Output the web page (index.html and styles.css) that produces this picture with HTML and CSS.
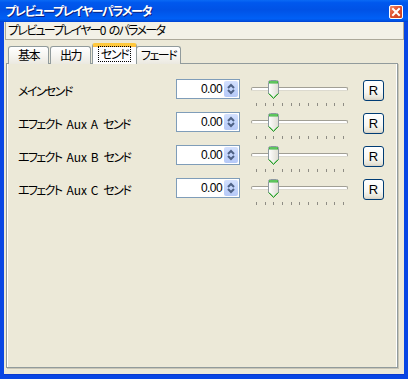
FILE: index.html
```html
<!DOCTYPE html>
<html lang="ja">
<head>
<meta charset="utf-8">
<title>プレビュープレイヤーパラメータ</title>
<link rel="stylesheet" href="styles.css">
</head>
<body>
<div class="window">
  <div class="titlebar">
    <span class="title">プレビュープレイヤーパラメータ</span>
    <span class="close"><svg width="10" height="10" viewBox="0 0 10 10"><path d="M2 2 L8 8 M8 2 L2 8" stroke="#fff" stroke-width="2" stroke-linecap="square"/></svg></span>
  </div>
  <div class="frame">
    <div class="subbar">プレビュープレイヤー0 のパラメータ</div>
    <div class="tabs">
      <div class="tab">基本</div>
      <div class="tab">出力</div>
      <div class="tab active"><span class="focus">センド</span></div>
      <div class="tab">フェード</div>
    </div>
    <div class="panel">
      <div class="row">
        <span class="label">メインセンド</span>
        <div class="num"><span class="val">0.00</span><span class="spin"><svg width="14" height="16" viewBox="0 0 14 16"><path d="M4 7 L7 4 L10 7" fill="none" stroke="#4d6185" stroke-width="2"/><path d="M4 9 L7 12 L10 9" fill="none" stroke="#4d6185" stroke-width="2"/></svg></span></div>
        <div class="slider">
          <div class="track"></div>
          <svg class="thumb" width="11" height="19" viewBox="0 0 11 19"><defs><linearGradient id="tg1" x1="0" y1="0" x2="1" y2="0"><stop offset="0" stop-color="#ffffff"/><stop offset="1" stop-color="#dedcd2"/></linearGradient></defs><path d="M0.5 2.5 Q0.5 0.5 2.5 0.5 H8.5 Q10.5 0.5 10.5 2.5 V13.5 L5.5 18.5 L0.5 13.5 Z" fill="url(#tg1)" stroke="#8c98a0"/><path d="M1 1.5 Q1 1 2.5 1 H8.5 Q10 1 10 1.5 V3.5 H1 Z" fill="#3cb33c"/><path d="M2 2 H9" stroke="#7fd67f"/><path d="M0.5 13.5 L5.5 18.5 L10.5 13.5" fill="none" stroke="#2f9f2f"/><path d="M1.5 13.5 L5.5 17.5 L9.5 13.5" fill="none" stroke="#8ed08e"/></svg>
          <div class="ticks"><i></i><i></i><i></i><i></i><i></i><i></i><i></i><i></i><i></i><i></i><i></i></div>
        </div>
        <button class="reset">R</button>
      </div>
      <div class="row">
        <span class="label">エフェクト <span class="lat">Aux A</span> センド</span>
        <div class="num"><span class="val">0.00</span><span class="spin"><svg width="14" height="16" viewBox="0 0 14 16"><path d="M4 7 L7 4 L10 7" fill="none" stroke="#4d6185" stroke-width="2"/><path d="M4 9 L7 12 L10 9" fill="none" stroke="#4d6185" stroke-width="2"/></svg></span></div>
        <div class="slider">
          <div class="track"></div>
          <svg class="thumb" width="11" height="19" viewBox="0 0 11 19"><defs><linearGradient id="tg2" x1="0" y1="0" x2="1" y2="0"><stop offset="0" stop-color="#ffffff"/><stop offset="1" stop-color="#dedcd2"/></linearGradient></defs><path d="M0.5 2.5 Q0.5 0.5 2.5 0.5 H8.5 Q10.5 0.5 10.5 2.5 V13.5 L5.5 18.5 L0.5 13.5 Z" fill="url(#tg2)" stroke="#8c98a0"/><path d="M1 1.5 Q1 1 2.5 1 H8.5 Q10 1 10 1.5 V3.5 H1 Z" fill="#3cb33c"/><path d="M2 2 H9" stroke="#7fd67f"/><path d="M0.5 13.5 L5.5 18.5 L10.5 13.5" fill="none" stroke="#2f9f2f"/><path d="M1.5 13.5 L5.5 17.5 L9.5 13.5" fill="none" stroke="#8ed08e"/></svg>
          <div class="ticks"><i></i><i></i><i></i><i></i><i></i><i></i><i></i><i></i><i></i><i></i><i></i></div>
        </div>
        <button class="reset">R</button>
      </div>
      <div class="row">
        <span class="label">エフェクト <span class="lat">Aux B</span> センド</span>
        <div class="num"><span class="val">0.00</span><span class="spin"><svg width="14" height="16" viewBox="0 0 14 16"><path d="M4 7 L7 4 L10 7" fill="none" stroke="#4d6185" stroke-width="2"/><path d="M4 9 L7 12 L10 9" fill="none" stroke="#4d6185" stroke-width="2"/></svg></span></div>
        <div class="slider">
          <div class="track"></div>
          <svg class="thumb" width="11" height="19" viewBox="0 0 11 19"><defs><linearGradient id="tg3" x1="0" y1="0" x2="1" y2="0"><stop offset="0" stop-color="#ffffff"/><stop offset="1" stop-color="#dedcd2"/></linearGradient></defs><path d="M0.5 2.5 Q0.5 0.5 2.5 0.5 H8.5 Q10.5 0.5 10.5 2.5 V13.5 L5.5 18.5 L0.5 13.5 Z" fill="url(#tg3)" stroke="#8c98a0"/><path d="M1 1.5 Q1 1 2.5 1 H8.5 Q10 1 10 1.5 V3.5 H1 Z" fill="#3cb33c"/><path d="M2 2 H9" stroke="#7fd67f"/><path d="M0.5 13.5 L5.5 18.5 L10.5 13.5" fill="none" stroke="#2f9f2f"/><path d="M1.5 13.5 L5.5 17.5 L9.5 13.5" fill="none" stroke="#8ed08e"/></svg>
          <div class="ticks"><i></i><i></i><i></i><i></i><i></i><i></i><i></i><i></i><i></i><i></i><i></i></div>
        </div>
        <button class="reset">R</button>
      </div>
      <div class="row">
        <span class="label">エフェクト <span class="lat">Aux C</span> センド</span>
        <div class="num"><span class="val">0.00</span><span class="spin"><svg width="14" height="16" viewBox="0 0 14 16"><path d="M4 7 L7 4 L10 7" fill="none" stroke="#4d6185" stroke-width="2"/><path d="M4 9 L7 12 L10 9" fill="none" stroke="#4d6185" stroke-width="2"/></svg></span></div>
        <div class="slider">
          <div class="track"></div>
          <svg class="thumb" width="11" height="19" viewBox="0 0 11 19"><defs><linearGradient id="tg4" x1="0" y1="0" x2="1" y2="0"><stop offset="0" stop-color="#ffffff"/><stop offset="1" stop-color="#dedcd2"/></linearGradient></defs><path d="M0.5 2.5 Q0.5 0.5 2.5 0.5 H8.5 Q10.5 0.5 10.5 2.5 V13.5 L5.5 18.5 L0.5 13.5 Z" fill="url(#tg4)" stroke="#8c98a0"/><path d="M1 1.5 Q1 1 2.5 1 H8.5 Q10 1 10 1.5 V3.5 H1 Z" fill="#3cb33c"/><path d="M2 2 H9" stroke="#7fd67f"/><path d="M0.5 13.5 L5.5 18.5 L10.5 13.5" fill="none" stroke="#2f9f2f"/><path d="M1.5 13.5 L5.5 17.5 L9.5 13.5" fill="none" stroke="#8ed08e"/></svg>
          <div class="ticks"><i></i><i></i><i></i><i></i><i></i><i></i><i></i><i></i><i></i><i></i><i></i></div>
        </div>
        <button class="reset">R</button>
      </div>
    </div>
  </div>
</div>
</body>
</html>
```

FILE: styles.css
```css
* { box-sizing: border-box; }
html, body { margin: 0; padding: 0; }
body {
  font-family: "Noto Sans CJK JP", "Liberation Sans", sans-serif;
  font-size: 12px;
  font-feature-settings: "palt";
  color: #000;
}
.window {
  width: 408px;
  height: 379px;
  display: flex;
  flex-direction: column;
  background: #ece9d8;
}
.titlebar {
  height: 22px;
  flex: none;
  display: flex;
  align-items: center;
  justify-content: space-between;
  padding: 0 5px 0 5px;
  background: linear-gradient(180deg, #0a6af5 0%, #0058ee 12%, #0052e6 45%, #0060f6 85%, #0050e0 95%, #0040d0 100%);
  color: #fff;
}
.title {
  font-weight: bold;
  font-size: 12px;
  line-height: 16px;
  text-shadow: 1px 1px 0 #0a1f80;
  letter-spacing: -1.3px;
}
.close {
  width: 14px;
  height: 14px;
  margin-top: 2px;
  border: 1px solid #fff;
  border-radius: 2px;
  background: linear-gradient(135deg, #f08a6a 0%, #e0502e 45%, #c9401f 100%);
  display: flex;
  align-items: center;
  justify-content: center;
}
.close svg { display: block; }
.frame {
  flex: 1;
  display: flex;
  flex-direction: column;
  border: 4px solid #0846e4;
  border-top: 0;
  box-shadow: inset 0 -1px 0 #0a3ad0;
  background: #ece9d8;
}
.subbar {
  height: 18px;
  margin-left: 1px;
  padding-left: 2px;
  border: 1px solid #aca899;
  border-top: 0;
  background: #f3f1e7;
  line-height: 16px;
  letter-spacing: -1.7px;
  word-spacing: 3px;
  white-space: nowrap;
}
.tabs {
  height: 24px;
  flex: none;
  display: flex;
  align-items: flex-end;
  padding-left: 4px;
  position: relative;
  z-index: 1;
}
.tab {
  height: 18px;
  min-width: 41px;
  margin-right: 1px;
  padding: 0 4px;
  border: 1px solid #919b9c;
  border-bottom: 0;
  border-radius: 3px 3px 0 0;
  background: linear-gradient(180deg, #ffffff 0%, #f6f5f1 50%, #ebe9e0 100%);
  line-height: 16px;
  text-align: center;
  white-space: nowrap;
  letter-spacing: -1.5px;
}
.tab.active {
  height: 21px;
  min-width: 45px;
  margin: 0 -1px 0 0;
  padding: 0 4px;
  border-top: 3px solid #ffc83c;
  box-shadow: inset 0 1px 0 #f7b940;
  background: #fcfcfe;
  line-height: 15px;
  position: relative;
  z-index: 2;
}
.focus {
  display: inline-block;
  outline: 1px dotted #000;
  outline-offset: 0;
  padding: 0 2px;
  line-height: 14px;
}
.panel {
  flex: 1;
  margin: -1px 6px 7px 2px;
  padding: 15px 0 0 11px;
  border: 1px solid #919b9c;
  background: #ece9d8;
  box-shadow: 1px 1px 0 #c8c5b6, inset 1px 0 0 #fff, inset -1px 0 0 #fff;
  display: flex;
  flex-direction: column;
}
.row {
  height: 33px;
  display: flex;
  align-items: flex-start;
  flex: none;
}
.label {
  width: 158px;
  height: 20px;
  padding-top: 2px;
  line-height: 20px;
  white-space: nowrap;
  letter-spacing: -1.6px;
  word-spacing: 4px;
}
.lat {
  letter-spacing: 0;
  word-spacing: 1px;
}
.num {
  width: 64px;
  height: 20px;
  border: 1px solid #7f9db9;
  background: #fff;
  display: flex;
  align-items: center;
  justify-content: flex-end;
  padding-right: 1px;
}
.val {
  font-family: "Liberation Sans", sans-serif;
  font-size: 12px;
  letter-spacing: -0.6px;
  margin-right: 2px;
}
.spin {
  width: 14px;
  height: 16px;
  background: linear-gradient(180deg, #d3e0fd 0%, #c2d4fb 50%, #b6c9f7 100%);
  border-radius: 2px;
  display: block;
}
.spin svg { display: block; }
.slider {
  width: 101px;
  height: 28px;
  margin-left: 9px;
  position: relative;
}
.track {
  margin: 8px 0 0 2px;
  width: 97px;
  height: 4px;
  border: 1px solid #a19f95;
  border-bottom-color: #dcdacf;
  border-radius: 2px;
  background: #fff;
}
.thumb {
  position: absolute;
  left: 19px;
  top: 1px;
  display: block;
}
.ticks {
  margin: 12px 0 0 7px;
  width: 88px;
  height: 3px;
  display: flex;
  justify-content: space-between;
}
.ticks i {
  width: 1px;
  height: 3px;
  background: #8e8c84;
}
.reset {
  width: 21px;
  height: 21px;
  margin: 1px 0 0 13px;
  padding: 0;
  border: 1px solid #003c74;
  border-radius: 3px;
  background: linear-gradient(180deg, #ffffff 0%, #f7f7f3 60%, #e6e3d6 90%, #d6d0c5 100%);
  font-family: "Liberation Sans", sans-serif;
  font-size: 13px;
  color: #000;
  line-height: 19px;
}
```
